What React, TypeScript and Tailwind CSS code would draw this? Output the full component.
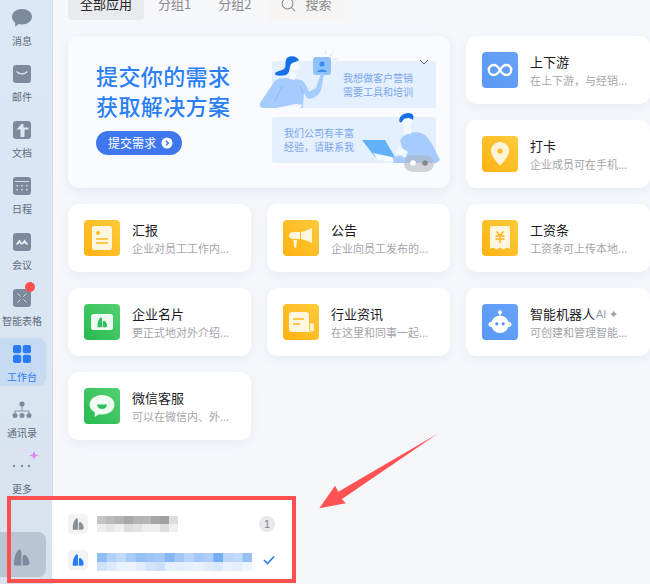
import type { ReactNode } from "react";

const LOGO = "M0.5 15.5 C0.3 10 1.5 4 4.6 1 C6 -0.2 7.4 0.6 7.4 3 L7.4 15.5 Z M8.6 15.5 L8.6 8 C8.6 5.6 10.2 4.8 11.6 6 C13.6 7.6 15 10.4 15 13 C15 14.6 14 15.5 12.6 15.5 Z";

function Logo({ className }: { className: string }) {
  return (
    <svg viewBox="0 0 15 16" className={className} fill="currentColor">
      <path d={LOGO} />
    </svg>
  );
}

const Gray = "#7c8a9e";

function NavIcon({ name }: { name: string }) {
  if (name === "chat")
    return (
      <svg viewBox="0 0 20 18" className="w-5 h-[18px]" fill={Gray}>
        <path d="M10 0 C15.5 0 20 3.3 20 7.8 C20 12.3 15.5 15.5 10 15.5 C8.8 15.5 7.6 15.3 6.6 15 L3.2 17.8 L3.2 13.6 C1.2 12.2 0 10.2 0 7.8 C0 3.3 4.5 0 10 0 Z" />
      </svg>
    );
  if (name === "mail")
    return (
      <svg viewBox="0 0 18 18" className="w-[18px] h-[18px]">
        <rect width="18" height="18" rx="3" fill={Gray} />
        <path d="M3.5 6.5 C7 9.5 11 9.5 14.5 6.5" stroke="#dfe8f2" strokeWidth="1.1" fill="none" />
      </svg>
    );
  if (name === "doc")
    return (
      <svg viewBox="0 0 18 18" className="w-[18px] h-[18px]">
        <rect width="18" height="18" rx="3" fill={Gray} />
        <path d="M8.5 3 L10.5 3 L10.5 6.5 L15.5 6.5 L15.5 8.5 L11.5 8.5 L11.5 16 L7.5 16 L7.5 8.5 L3.5 8.5 Z" fill="#dfe8f2" />
      </svg>
    );
  if (name === "calendar")
    return (
      <svg viewBox="0 0 18 18" className="w-[18px] h-[18px]">
        <rect width="18" height="18" rx="3" fill={Gray} />
        <path d="M2 4.5 H16" stroke="#dfe8f2" strokeWidth="0.9" />
        <g fill="#dfe8f2">
          <rect x="3.5" y="8" width="1.4" height="1.4" />
          <rect x="8.3" y="8" width="1.4" height="1.4" />
          <rect x="13.1" y="8" width="1.4" height="1.4" />
          <rect x="3.5" y="12" width="1.4" height="1.4" />
          <rect x="8.3" y="12" width="1.4" height="1.4" />
          <rect x="13.1" y="12" width="1.4" height="1.4" />
        </g>
      </svg>
    );
  if (name === "meeting")
    return (
      <svg viewBox="0 0 18 18" className="w-[18px] h-[18px]">
        <rect width="18" height="18" rx="3" fill={Gray} />
        <path d="M2.5 11.5 L6.5 6.5 L9 10 L11.5 6.5 L15.5 11.5 L12.5 11.5 L11.3 9.8 L9.8 11.5 L8 11.5 L6.5 9.8 L5.2 11.5 Z" fill="#e6edf5" />
      </svg>
    );
  if (name === "sheet")
    return (
      <svg viewBox="0 0 18 18" className="w-[18px] h-[18px]">
        <rect width="18" height="18" rx="3" fill={Gray} />
        <path d="M4.5 4.5 L7.5 7.5 M13.5 4.5 L10.5 7.5 M4.5 13.5 L7.5 10.5 M13.5 13.5 L10.5 10.5" stroke="#dfe8f2" strokeWidth="0.9" />
      </svg>
    );
  if (name === "work")
    return (
      <svg viewBox="0 0 18 18" className="w-[18px] h-[18px]" fill="#2a7cf6">
        <rect width="8.2" height="8.2" rx="2" />
        <rect x="9.8" width="8.2" height="8.2" rx="2" />
        <rect y="9.8" width="8.2" height="8.2" rx="2" />
        <rect x="9.8" y="9.8" width="8.2" height="8.2" rx="2" />
      </svg>
    );
  if (name === "org")
    return (
      <svg viewBox="0 0 20 18" className="w-5 h-[18px]" fill={Gray}>
        <circle cx="10" cy="3" r="2.6" />
        <path d="M10 5 V10 M3 12 V10 H17 V12" stroke={Gray} strokeWidth="0.9" fill="none" />
        <circle cx="3" cy="14.5" r="2.5" />
        <circle cx="10" cy="14.5" r="2.5" />
        <circle cx="17" cy="14.5" r="2.5" />
      </svg>
    );
  return (
    <svg viewBox="0 4 26 22" className="w-[26px] h-[22px] overflow-visible">
      <path d="M25 0 L26.3 3.2 L30 4.5 L26.3 5.8 L25 9 L23.7 5.8 L20 4.5 L23.7 3.2 Z" fill="#dc8cea" />
      <g fill={Gray}>
        <circle cx="5" cy="15" r="1.2" />
        <circle cx="13" cy="15" r="1.2" />
        <circle cx="20" cy="15" r="1.2" />
      </g>
    </svg>
  );
}

const navItems = [
  { icon: "chat", label: "消息" },
  { icon: "mail", label: "邮件" },
  { icon: "doc", label: "文档" },
  { icon: "calendar", label: "日程" },
  { icon: "meeting", label: "会议" },
  { icon: "sheet", label: "智能表格", dot: true },
  { icon: "work", label: "工作台", active: true },
  { icon: "org", label: "通讯录" },
  { icon: "more", label: "更多" },
];

function Sidebar() {
  return (
    <div className="w-[53px] shrink-0 h-[584px] pt-[2px] flex flex-col border-r border-[#d3dbe6] bg-gradient-to-b from-[#dbe8f6] to-[#d9e3ef]">
      {navItems.map((item) => (
        <div
          key={item.label}
          className={`relative w-[46px] h-12 mb-2 pt-[7px] pr-[2px] flex flex-col items-center rounded-r-lg ${item.active ? "bg-[#c6daf1]" : ""}`}
        >
          <div className="h-[18px] flex items-center justify-center">
            <NavIcon name={item.icon} />
          </div>
          <span className={`mt-[7px] text-[10px] leading-[14px] whitespace-nowrap ${item.active ? "text-[#2a7cf6]" : "text-[#5f6b7c]"}`}>
            {item.label}
          </span>
          {item.dot && <span className="absolute left-[25px] top-0 w-2.5 h-2.5 rounded-full bg-[#ff4f4f]" />}
        </div>
      ))}
      <div className="mt-[26px] w-[46px] h-[45px] rounded-r-lg bg-[#bac5d4] pr-[3px] pt-[5px] flex items-center justify-center text-[#7c8a9e]">
        <Logo className="w-[17px] h-[17px]" />
      </div>
    </div>
  );
}

const yellow = "bg-gradient-to-tr from-[#ffb20d] to-[#ffcb38]";
const green = "bg-gradient-to-bl from-[#52d071] to-[#24ba4f]";
const blue = "bg-gradient-to-tr from-[#5a99f5] to-[#66a3f7]";

function Tile({ color, children }: { color: string; children: ReactNode }) {
  return <div className={`w-9 h-9 shrink-0 rounded flex items-center justify-center ${color}`}>{children}</div>;
}

const icons: Record<string, ReactNode> = {
  link: (
    <svg viewBox="0 0 26 14" className="w-[26px] h-[14px]" fill="none" stroke="#fff" strokeWidth="2.4">
      <path d="M13 7 C11 3.5 9.5 2 6.8 2 C4 2 1.8 4.2 1.8 7 C1.8 9.8 4 12 6.8 12 C9.5 12 11 10.5 13 7 C15 3.5 16.5 2 19.2 2 C22 2 24.2 4.2 24.2 7 C24.2 9.8 22 12 19.2 12 C16.5 12 15 10.5 13 7 Z" />
    </svg>
  ),
  pin: (
    <svg viewBox="0 0 18 24" className="w-[18px] h-6">
      <path d="M9 0 C14 0 18 3.8 18 8.8 C18 14 13 19.5 9 23.5 C5 19.5 0 14 0 8.8 C0 3.8 4 0 9 0 Z" fill="#fff4d9" />
      <circle cx="9" cy="9" r="2.6" fill="#ffbb1c" />
    </svg>
  ),
  report: (
    <svg viewBox="0 0 20 24" className="w-5 h-6">
      <rect width="20" height="24" rx="2.5" fill="#fff6df" />
      <circle cx="6" cy="7" r="2" fill="#ffbb1c" />
      <path d="M4 13 H16 M4 17 H16" stroke="#ffbb1c" strokeWidth="1.4" />
    </svg>
  ),
  horn: (
    <svg viewBox="0 0 24 20" className="w-6 h-5" fill="#fff6df">
      <path d="M23 0 V15 C19 13 15 11.5 12 11 V4 C15 3.5 19 2 23 0 Z" />
      <path d="M11 4 V11 H5 C2 11 0 9.7 0 7.5 C0 5.3 2 4 5 4 Z" />
      <path d="M4.5 12 H8 L7.3 19 C7.2 20 5.4 20 5.2 19 Z" />
    </svg>
  ),
  salary: (
    <svg viewBox="0 0 20 24" className="w-5 h-6">
      <path d="M2 0 H18 C19 0 20 1 20 2 V23 L17 21.5 L13.5 23.5 L10 21.5 L6.5 23.5 L3 21.5 L0 23 V2 C0 1 1 0 2 0 Z" fill="#fff6df" />
      <path d="M6.5 5.5 L10 9.5 L13.5 5.5 M5.5 10 H14.5 M5.5 13 H14.5 M10 9.5 V17" stroke="#ffb81a" strokeWidth="1.5" fill="none" />
    </svg>
  ),
  card: (
    <svg viewBox="0 0 22 16" className="w-[22px] h-4">
      <rect width="22" height="16" rx="2.5" fill="#effbf1" />
      <g transform="translate(6.2 3.2) scale(0.65)">
        <path d={LOGO} fill="#2fc05a" />
      </g>
    </svg>
  ),
  news: (
    <svg viewBox="0 0 25 20" className="w-[25px] h-5">
      <path d="M3 0 H17 C19 0 20 1 20 3 V17 C20 18.5 21 19.5 22 20 H3 C1 20 0 19 0 17 V3 C0 1 1 0 3 0 Z" fill="#fff6df" />
      <rect x="21" y="11" width="4" height="8.5" rx="2" fill="#fff1cc" />
      <path d="M4 7 H15 M4 12 H11" stroke="#ffbb1c" strokeWidth="1.5" />
    </svg>
  ),
  robot: (
    <svg viewBox="0 0 26 26" className="w-6 h-6">
      <circle cx="13" cy="2.5" r="2.2" fill="#fff" />
      <path d="M13 4 V7" stroke="#fff" strokeWidth="1.2" />
      <circle cx="13" cy="15.5" r="9.5" fill="#fff" />
      <rect x="0.5" y="13" width="25" height="5.5" rx="2.7" fill="#fff" />
      <circle cx="9.5" cy="15" r="1.7" fill="#4f8fe8" />
      <circle cx="16.5" cy="15" r="1.7" fill="#4f8fe8" />
    </svg>
  ),
  wechat: (
    <svg viewBox="0 0 26 24" className="w-[26px] h-6">
      <path d="M13 1 C20 1 25.5 5.3 25.5 10.8 C25.5 16.3 20 20.5 13 20.5 C12 20.5 11 20.4 10 20.2 L5.5 23 L6 18.5 C2.8 16.8 0.5 14 0.5 10.8 C0.5 5.3 6 1 13 1 Z" fill="#f0fbf2" />
      <path d="M8 10.5 H18 C17.5 13.5 15.5 15 13 15 C10.5 15 8.5 13.5 8 10.5 Z" fill="#2fc05a" />
    </svg>
  ),
};

function AppCard({ title, desc, color, icon, ai }: { title: string; desc: string; color: string; icon: string; ai?: boolean }) {
  return (
    <div className="bg-white rounded-[10px] shadow-[0_3px_10px_rgba(120,135,170,0.1)] p-4 flex gap-3">
      <Tile color={color}>{icons[icon]}</Tile>
      <div className="min-w-0">
        <div className="flex items-center text-[13px] leading-5 text-[#1b1b1f] whitespace-nowrap">
          {title}
          {ai && <span className="ml-[1px] text-[11px] text-[#9a9ea6] font-['Liberation_Sans',sans-serif]">AI ✦</span>}
        </div>
        <div className="text-[11px] leading-4 text-[#a3a5aa] whitespace-nowrap">{desc}</div>
      </div>
    </div>
  );
}

function BannerArt() {
  return (
    <svg viewBox="258 36 192 152" className="w-[192px] h-[152px] shrink-0">
      <rect x="272" y="61" width="164" height="47" rx="3" fill="#e5f0ff" />
      <rect x="272" y="117" width="164" height="46" rx="3" fill="#e5f0ff" />
      <g fontSize="10" fill="#7aa6ea">
        <text x="343" y="82">我想做客户营销</text>
        <text x="343" y="96">需要工具和培训</text>
        <text x="284" y="137">我们公司有丰富</text>
        <text x="284" y="151">经验，请联系我</text>
      </g>
      <path d="M420 60 L424 64 L428 60" fill="none" stroke="#5f6672" strokeWidth="1" />
      <path d="M325 54 L326 51 M330 56 L333 53 M333 60 L337 59" stroke="#cfe0f7" strokeWidth="1" />
      <rect x="313" y="57" width="18" height="18" rx="3" fill="#8fc2fb" />
      <circle cx="322" cy="64" r="2.6" fill="#3d8cf0" />
      <path d="M317 72 C318 68.5 326 68.5 327 72 Z" fill="#3d8cf0" />
      {/* woman */}
      <path d="M260 103 L274 82 C277 78 283 78 288 78 L301 80 C304 81 307 86 309 92 L316 88 L321 73 L324 75 L321 90 C319 96 312 100 307 98 L304 93 L303 108 L263 108 C260 108 259 105 260 103 Z" fill="#a5ccfd" />
      <path d="M275 101 L282 86 M303 93 L300 86" stroke="#7fb2f5" strokeWidth="0.7" fill="none" />
      <path d="M276 108 L296 104 L303 105 L300 108 Z" fill="#f4f8ff" />
      <path d="M290 72 L296 72 L295 80 L289 79 Z" fill="#f4f8ff" />
      <circle cx="295" cy="66" r="5" fill="#f4f8ff" />
      <path d="M299 60 C297 56 290 55 287 58 C284 62 287 66 284 69 C281 71 275 71 275 74 C275 76 281 76 286 75 C290 73 289 68 291 64 C293 62 297 62 299 60 Z" fill="#1670e8" />
      {/* man */}
      <path d="M362 140 L385 140 L395 157 L375 157 Z" fill="#62b2fb" />
      <path d="M400 140 C406 131 420 130 426 136 C432 142 436 152 440 160 L436 163 L393 163 L392 157 L404 155 Z" fill="#a5ccfd" />
      <path d="M373 153 L392 157 L394 162 L378 160 Z" fill="#f4f8ff" />
      <path d="M399 146 L408 152 L405 158 L396 152 Z" fill="#f4f8ff" />
      <path d="M404 126 L411 126 L411 134 L404 134 Z" fill="#f4f8ff" />
      <circle cx="407" cy="122" r="5" fill="#f4f8ff" />
      <path d="M399.5 122 C398 115 407 111 412 114 C414 115 413.5 118 413 120 C409 117 405 118 403 120 C402 122 401 123 399.5 122 Z" fill="#1670e8" />
      {/* pager */}
      <rect x="404" y="155" width="30" height="17" rx="8.5" fill="#b0b3b8" fillOpacity="0.55" />
      <circle cx="413" cy="163" r="2.8" fill="#fff" />
      <circle cx="425" cy="163" r="2.8" fill="#85898f" />
    </svg>
  );
}

function Banner() {
  return (
    <div className="col-span-2 row-span-2 bg-[#f9fbff] rounded-[10px] shadow-[0_3px_10px_rgba(120,135,170,0.13)] flex justify-between">
      <div className="pl-7 pt-6">
        <div className="text-[22px] leading-[30px] font-medium tracking-[0.4px] text-[#2b7ff5] whitespace-nowrap">
          <div>提交你的需求</div>
          <div>获取解决方案</div>
        </div>
        <div className="mt-[11px] w-[86px] h-6 rounded-full bg-[#3f78ee] text-white text-xs flex items-center pl-3 gap-[5px] whitespace-nowrap">
          提交需求
          <svg viewBox="0 0 12 12" className="w-3 h-3">
            <circle cx="6" cy="6" r="5.5" fill="#fff" />
            <path d="M5 3.8 L7.2 6 L5 8.2" fill="none" stroke="#3f78ee" strokeWidth="1.4" />
          </svg>
        </div>
      </div>
      <BannerArt />
    </div>
  );
}

// pixelated company names in the switcher
const mosaicGray = [
  ["#c6c5c5", "#bcbbbb", "#b4b3b2", "#a7a9ad", "#b4b4b5", "#b6b6b6", "#a5a5a7", "#a3a19f", "#dcdde0"],
  ["#eceded", "#e6e6e6", "#f0f0ee", "#dcdfe1", "#e2e3e5", "#eeeeee", "#eceded", "#dedede", "#eeeff1"],
];
const mosaicBlue = [
  ["#8fbdf6", "#b4d2f8", "#c2daf9", "#a9cbf7", "#96c0f6", "#9fc5f7", "#a5c9f7", "#85b6f5", "#a3c7f7", "#b6d3f8", "#a4c8f7", "#aecdf8", "#76adf3", "#bcd7f9", "#c1daf9", "#96c0f6"],
  ["#cfe2fb", "#dceafc", "#eaf2fd", "#ecf3fd", "#e1ecfc", "#d2e3fb", "#c9dffa", "#e6f0fd", "#e4eefc", "#e7f0fd", "#eaf2fd", "#e0ecfc", "#dbe9fc", "#e8f1fd", "#e4eefc", "#eff5fe"],
];

function Mosaic({ rows, cell, h }: { rows: string[][]; cell: number; h: number }) {
  const w = rows[0].length * cell;
  return (
    <svg width={w} height={h * 2} viewBox={`0 0 ${w} ${h * 2}`} className="shrink-0">
      {rows.map((row, r) =>
        row.map((c, i) => <rect key={`${r}-${i}`} x={i * cell} y={r * h} width={cell + 0.5} height={h + 0.5} fill={c} />)
      )}
    </svg>
  );
}

function Switcher() {
  return (
    <div className="absolute left-[52px] top-[500px] w-[240px] h-[78px] bg-white pl-4 pr-[17px] pt-[14px] flex flex-col gap-4">
      <div className="flex items-center h-5">
        <div className="w-5 h-5 rounded-sm bg-[#f3f3f5] flex items-center justify-center text-[#8a8f98]">
          <Logo className="w-3 h-3" />
        </div>
        <div className="ml-[9px]">
          <Mosaic rows={mosaicGray} cell={9} h={8} />
        </div>
        <div className="ml-auto w-4 h-4 rounded-full bg-[#e8e9ec] text-[#82858b] text-[11px] flex items-center justify-center font-['Liberation_Sans',sans-serif]">
          1
        </div>
      </div>
      <div className="flex items-center h-5">
        <div className="w-5 h-5 rounded-sm bg-[#f3f3f5] flex items-center justify-center text-[#2a7cf6]">
          <Logo className="w-3 h-3" />
        </div>
        <div className="ml-[9px] mt-[4px]">
          <Mosaic rows={mosaicBlue} cell={9.7} h={9} />
        </div>
        <svg viewBox="0 0 12 10" className="ml-auto w-3 h-2.5">
          <path d="M1 5 L4.5 8.5 L11 1.5" fill="none" stroke="#2f7de8" strokeWidth="1.7" />
        </svg>
      </div>
    </div>
  );
}

export default function App() {
  return (
    <div className="relative w-[650px] h-[584px] overflow-hidden flex bg-[#f5f7fb] font-['Noto_Sans_CJK_SC','Noto_Sans',sans-serif]">
      <Sidebar />
      <div className="flex-1 pl-[15px] min-w-0">
        {/* tabs, the top of them is cut off by the window */}
        <div className="-mt-3 h-8 flex items-center text-[13px] text-[#8a8a8a]">
          <div className="w-[76px] h-8 bg-[#e9eaee] text-[#26262a] flex items-center justify-center rounded">全部应用</div>
          <div className="ml-[14px]">分组1</div>
          <div className="ml-[27px]">分组2</div>
          <div className="ml-[17px] w-[76px] h-8 rounded bg-[#f6f5f3] flex items-center pl-[13px] gap-[9px]">
            <svg viewBox="0 0 16 16" className="w-[15px] h-[15px]" fill="none" stroke="#85888d" strokeWidth="1.1">
              <circle cx="7" cy="7" r="5.8" />
              <path d="M11.2 11.2 L15 15" />
            </svg>
            搜索
          </div>
        </div>
        <div className="mt-4 grid grid-cols-[183px_183px_184px] auto-rows-[68px] gap-4">
          <Banner />
          <AppCard title="上下游" desc="在上下游，与经销..." color={blue} icon="link" />
          <AppCard title="打卡" desc="企业成员可在手机..." color={yellow} icon="pin" />
          <AppCard title="汇报" desc="企业对员工工作内..." color={yellow} icon="report" />
          <AppCard title="公告" desc="企业向员工发布的..." color={yellow} icon="horn" />
          <AppCard title="工资条" desc="工资条可上传本地..." color={yellow} icon="salary" />
          <AppCard title="企业名片" desc="更正式地对外介绍..." color={green} icon="card" />
          <AppCard title="行业资讯" desc="在这里和同事一起..." color={yellow} icon="news" />
          <AppCard title="智能机器人" desc="可创建和管理智能..." color={blue} icon="robot" ai />
          <AppCard title="微信客服" desc="可以在微信内、外..." color={green} icon="wechat" />
        </div>
      </div>
      <Switcher />
      {/* red annotation drawn over the screenshot */}
      <div className="absolute left-[7px] top-[496px] w-[289px] h-[87px] border-4 border-[#ff5050]" />
      <svg viewBox="0 0 650 584" className="absolute inset-0 w-[650px] h-[584px] pointer-events-none">
        <polygon points="438,433.5 338.3,491.7 335,485.7 319.3,508.3 346,503.3 341.7,499.3" fill="#ff5252" />
      </svg>
    </div>
  );
}
